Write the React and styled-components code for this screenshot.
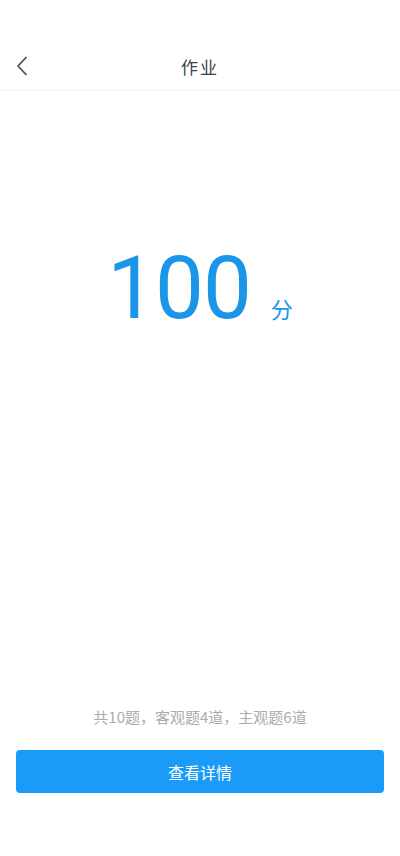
import React from 'react';
import styled, { createGlobalStyle } from 'styled-components';

const GlobalStyle = createGlobalStyle`
  html, body {
    margin: 0;
    padding: 0;
    background: #ffffff;
    font-family: Roboto, "Noto Sans CJK SC", sans-serif;
  }
`;

const Page = styled.div`
  display: flex;
  flex-direction: column;
  min-height: 100vh;
  box-sizing: border-box;
  background: #ffffff;
`;

const StatusBar = styled.div`
  height: 42px;
`;

const Header = styled.header`
  position: relative;
  display: flex;
  align-items: center;
  justify-content: center;
  height: 48px;
  border-bottom: 1px solid #f3f3f3;
`;

const BackButton = styled.button`
  position: absolute;
  left: 11px;
  top: 50%;
  transform: translateY(-50%);
  display: flex;
  align-items: center;
  justify-content: center;
  width: 22px;
  height: 30px;
  padding: 0;
  border: none;
  background: none;
`;

const Title = styled.h1`
  margin: 0;
  font-family: "Noto Sans CJK SC", sans-serif;
  font-size: 17px;
  font-weight: 400;
  letter-spacing: 2px;
  color: #3a4349;
`;

const Main = styled.main`
  flex: 1;
  display: flex;
  flex-direction: column;
  align-items: center;
  padding-top: 153px;
`;

const ScoreRow = styled.div`
  display: flex;
  align-items: baseline;
  gap: 20px;
  color: #1a95e7;
`;

const ScoreValue = styled.span`
  font-family: Roboto, sans-serif;
  font-size: 87px;
  line-height: 88px;
  font-weight: 400;
  letter-spacing: -1px;
`;

const ScoreUnit = styled.span`
  font-family: "Noto Sans CJK SC", sans-serif;
  font-size: 22px;
  line-height: 22px;
`;

const Spacer = styled.div`
  flex: 1;
`;

const Summary = styled.p`
  margin: 0 0 23px;
  font-family: "Noto Sans CJK SC", sans-serif;
  font-size: 15px;
  line-height: 20px;
  color: #acacac;
  text-align: center;
`;

const Footer = styled.div`
  padding: 0 16px 63px;
`;

const DetailButton = styled.button`
  display: block;
  width: 100%;
  height: 43px;
  border: none;
  border-radius: 4px;
  background: #1a9bf7;
  color: #ffffff;
  font-family: "Noto Sans CJK SC", sans-serif;
  font-size: 16px;
  cursor: pointer;
`;

const App = () => (
  <Page>
    <GlobalStyle />
    <StatusBar />
    <Header>
      <BackButton aria-label="返回">
        <svg width="12" height="20" viewBox="0 0 12 20" fill="none">
          <path d="M10 1.5L2 10l8 8.5" stroke="#4a5258" strokeWidth="1.8" strokeLinecap="round" strokeLinejoin="round" />
        </svg>
      </BackButton>
      <Title>作业</Title>
    </Header>
    <Main>
      <ScoreRow>
        <ScoreValue>100</ScoreValue>
        <ScoreUnit>分</ScoreUnit>
      </ScoreRow>
      <Spacer />
      <Summary>共10题，客观题4道，主观题6道</Summary>
    </Main>
    <Footer>
      <DetailButton>查看详情</DetailButton>
    </Footer>
  </Page>
);

export default App;
